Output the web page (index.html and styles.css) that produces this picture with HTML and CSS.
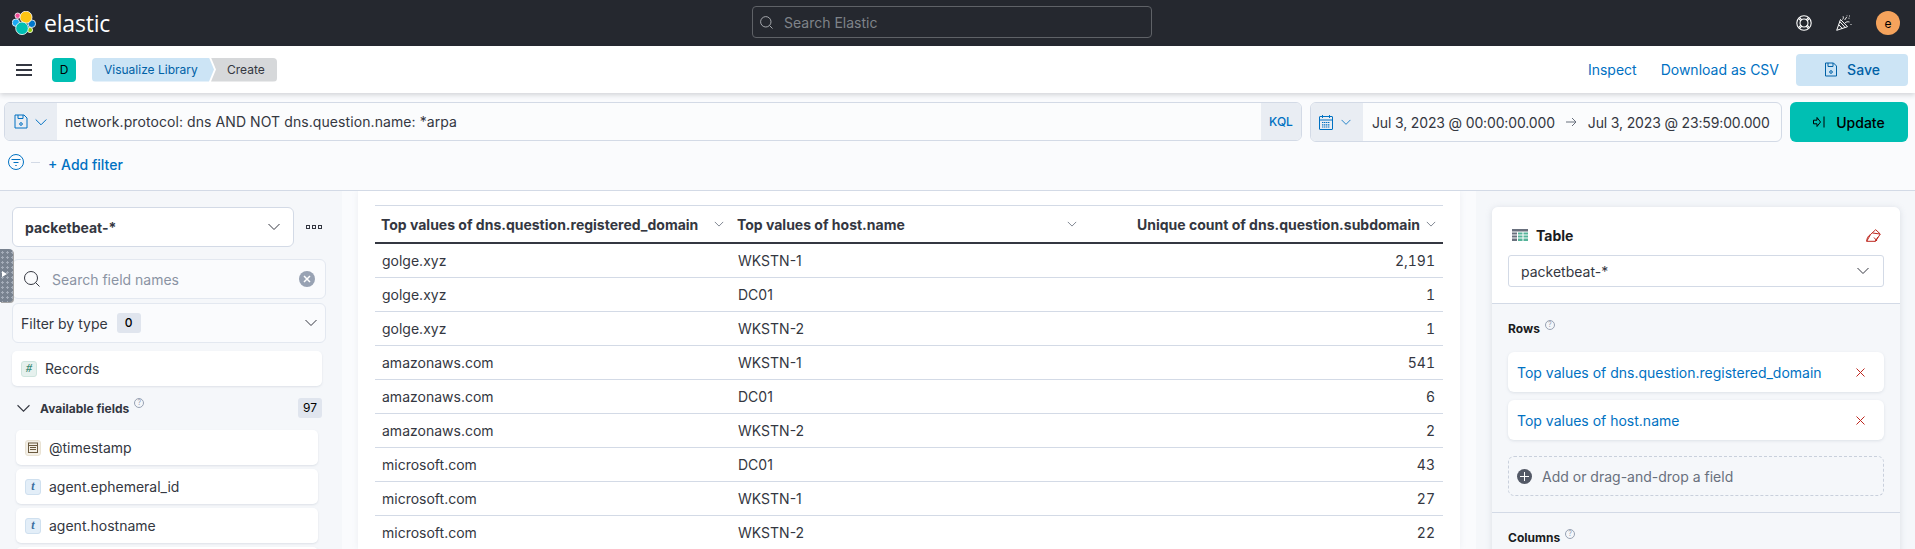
FILE: index.html
```html
<!DOCTYPE html>
<html lang="en">
<head>
  <meta charset="UTF-8" />
  <title>Create - Elastic</title>
  <link rel="stylesheet" href="styles.css">
</head>
<body>
  <header class="topbar">
    <div class="brand">
      <svg width="24" height="24" viewBox="0 0 24 24">
        <circle cx="5.700" cy="4.700" r="2.700" fill="#f04e98" stroke="#fff" stroke-width=".8"/>
        <circle cx="3.900" cy="11.700" r="3.700" fill="#1ba9f5" stroke="#fff" stroke-width=".8"/>
        <circle cx="19.800" cy="12.700" r="3.800" fill="#0077cc" stroke="#fff" stroke-width=".8"/>
        <circle cx="18" cy="19" r="2.600" fill="#93c90e" stroke="#fff" stroke-width=".8"/>
        <circle cx="14" cy="6.200" r="6" fill="#fec514" stroke="#fff" stroke-width=".8"/>
        <circle cx="10" cy="17.300" r="6.300" fill="#00bfb3" stroke="#fff" stroke-width=".8"/>
      </svg>
      <span class="brand-name">elastic</span>
    </div>
    <div class="global-search">
      <svg width="13" height="13" viewBox="0 0 13 13" fill="none" stroke="#a5a8ad"><circle cx="5.800" cy="5.800" r="5.200"/><path d="M9.500 9.500l3 3"/></svg>
      <span>Search Elastic</span>
    </div>
    <div class="top-icons">
      <svg width="16" height="16" viewBox="0 0 16 16" fill="none" stroke="#fff" stroke-width="1.100"><circle cx="8" cy="8" r="7.200"/><circle cx="8" cy="8" r="4"/><path d="M2.700 3.700l2.400 2.400M3.700 2.700l2.400 2.400M13.300 3.700l-2.400 2.400M12.300 2.700l-2.400 2.400M2.700 12.300l2.400-2.400M3.700 13.300l2.400-2.400M13.300 12.300l-2.400-2.400M12.300 13.300l-2.400-2.400"/></svg>
      <svg width="16" height="16" viewBox="0 0 16 16" fill="none" stroke="#fff"><path d="M.7 15.300l3.800-10.800 7 7.200z"/><path d="M2.800 9.800l3.800 4M3.900 6.700l5.200 5.700"/><path d="M6.500 4.500c1-1 1-2 .6-3.200M9 8c1.200-1.300 2.700-1.500 4.500-1M8.700 5l2-3M12.500 3.200h1M13.500 .5v1M14.500 9.500h1M11 .5v.8" stroke-width=".9"/></svg>
      <span class="avatar">e</span>
    </div>
  </header>

  <nav class="appbar">
    <button class="menu-btn" aria-label="Menu"><span></span><span></span><span></span></button>
    <span class="space-badge">D</span>
    <div class="crumbs">
      <span class="crumb crumb-link">Visualize Library</span>
      <span class="crumb crumb-current">Create</span>
    </div>
    <div class="app-actions">
      <a>Inspect</a>
      <a>Download as CSV</a>
      <button class="save-btn">
        <svg width="14" height="15" viewBox="0 0 14 15" fill="none" stroke="#0061a6"><path d="M1.500 1h8l3 3v10h-11z"/><path d="M4 1v3.500h5v-3.500"/><circle cx="7" cy="10" r="1.300"/></svg>
        Save
      </button>
    </div>
  </nav>

  <section class="querybar">
    <div class="query-row">
      <div class="query-input">
        <div class="addon addon-left">
          <svg width="14" height="15" viewBox="0 0 14 15" fill="none" stroke="#0071c2"><path d="M1 1h9l3 3v10h-12z"/><path d="M4 1v3.500h5v-3.500"/><circle cx="7" cy="10" r="1.300"/></svg>
          <svg width="12" height="12" viewBox="0 0 12 12" fill="none" stroke="#0071c2"><path d="M.7 3.500l5.300 5.300 5.300-5.300"/></svg>
        </div>
        <div class="query-text">network.protocol: dns AND NOT dns.question.name: *arpa</div>
        <div class="addon addon-kql">KQL</div>
      </div>
      <div class="date-picker">
        <div class="addon addon-date">
          <svg width="14" height="15" viewBox="0 0 14 15" fill="none" stroke="#0071c2"><rect x=".5" y="1.500" width="13" height="13" rx=".5"/><path d="M.5 5h13M3.500 0v3M10.500 0v3"/><path d="M3 7.500h8M3 9.800h8M3 12h8" stroke-dasharray="1.300 .6" stroke-width="1.200"/></svg>
          <svg width="10" height="10" viewBox="0 0 12 12" fill="none" stroke="#0071c2"><path d="M.7 3.500l5.300 5.300 5.300-5.300"/></svg>
        </div>
        <div class="date-range">
          <span>Jul 3, 2023 @ 00:00:00.000</span>
          <svg width="11" height="10" viewBox="0 0 11 10" fill="none" stroke="#69707d"><path d="M0 5h10M6 1l4 4-4 4"/></svg>
          <span>Jul 3, 2023 @ 23:59:00.000</span>
        </div>
      </div>
      <button class="update-btn">
        <svg width="12" height="12" viewBox="0 0 12 12" fill="none" stroke="#000"><path d="M.5 4.200h3.500v-2.700l3.500 4.500-3.500 4.500v-2.700h-3.500z"/><path d="M11 .5v11"/></svg>
        Update
      </button>
    </div>
    <div class="filter-row">
      <svg class="filter-icon" width="16" height="16" viewBox="0 0 16 16" fill="none" stroke="#0071c2"><circle cx="8" cy="8" r="7.500"/><path d="M3.500 5.500h9M5.500 8.500h5M7.300 11.500h1.400"/></svg>
      <span class="filter-dash"></span>
      <a class="add-filter">+ Add filter</a>
    </div>
  </section>

  <main class="workspace">
    <aside class="fields">
      <span class="drag-handle"></span>
      <div class="pattern-row">
        <div class="pattern-select">
          <b>packetbeat-*</b>
          <svg width="12" height="12" viewBox="0 0 12 12" fill="none" stroke="#343741"><path d="M.5 3l5.500 5.500 5.500-5.500"/></svg>
        </div>
        <svg class="pattern-more" width="16" height="16" viewBox="0 0 16 16" fill="none" stroke="#343741"><rect x=".5" y="6.500" width="3" height="3"/><rect x="6.500" y="6.500" width="3" height="3"/><rect x="12.500" y="6.500" width="3" height="3"/></svg>
      </div>
      <div class="field-search">
        <svg width="16" height="16" viewBox="0 0 16 16" fill="none" stroke="#343741"><circle cx="7" cy="7" r="6.500"/><path d="M11.500 11.500l4 4"/></svg>
        <span>Search field names</span>
        <i class="clear-btn">
          <svg width="8" height="8" viewBox="0 0 8 8" stroke="#fff" stroke-width="1.500" fill="none"><path d="M1 1l6 6M7 1l-6 6"/></svg>
        </i>
      </div>
      <div class="type-filter">
        <span>Filter by type</span>
        <em>0</em>
        <svg width="12" height="12" viewBox="0 0 12 12" fill="none" stroke="#343741"><path d="M.5 3l5.500 5.500 5.500-5.500"/></svg>
      </div>
      <div class="field-item field-records"><i class="token token-num">#</i>Records</div>
      <div class="avail-head">
        <svg width="13" height="13" viewBox="0 0 12 12" fill="none" stroke="#343741"><path d="M.5 3l5.500 5.500 5.500-5.500"/></svg>
        <b>Available fields</b>
        <i class="help">?</i>
        <em>97</em>
      </div>
      <div class="field-list">
        <div class="field-item"><i class="token token-date">
          <svg width="10" height="11" viewBox="0 0 10 11" fill="none" stroke="#6b5a3f"><rect x=".5" y="1" width="9" height="9.500"/><path d="M.5 3.500h9M2 5.500h6M2 7.500h6"/></svg>
        </i>@timestamp</div>
        <div class="field-item"><i class="token token-text">t</i>agent.ephemeral_id</div>
        <div class="field-item"><i class="token token-text">t</i>agent.hostname</div>
        <div class="field-item"></div>
      </div>
    </aside>

    <div class="chart-wrap">
      <section class="chart-panel">
        <table class="data-table">
          <colgroup><col class="col-a"><col class="col-b"><col class="col-c"></colgroup>
          <thead>
            <tr>
              <th><div class="th-in"><span>Top values of dns.question.registered_domain</span><svg width="10" height="10" viewBox="0 0 12 12" fill="none" stroke="#69707d"><path d="M1 3.500l5 5 5-5"/></svg></div></th>
              <th><div class="th-in"><span>Top values of host.name</span><svg width="10" height="10" viewBox="0 0 12 12" fill="none" stroke="#69707d"><path d="M1 3.500l5 5 5-5"/></svg></div></th>
              <th><div class="th-in th-end"><span>Unique count of dns.question.subdomain</span><svg width="10" height="10" viewBox="0 0 12 12" fill="none" stroke="#69707d"><path d="M1 3.500l5 5 5-5"/></svg></div></th>
            </tr>
          </thead>
          <tbody>
            <tr><td>golge.xyz</td><td>WKSTN-1</td><td class="num">2,191</td></tr>
            <tr><td>golge.xyz</td><td>DC01</td><td class="num">1</td></tr>
            <tr><td>golge.xyz</td><td>WKSTN-2</td><td class="num">1</td></tr>
            <tr><td>amazonaws.com</td><td>WKSTN-1</td><td class="num">541</td></tr>
            <tr><td>amazonaws.com</td><td>DC01</td><td class="num">6</td></tr>
            <tr><td>amazonaws.com</td><td>WKSTN-2</td><td class="num">2</td></tr>
            <tr><td>microsoft.com</td><td>DC01</td><td class="num">43</td></tr>
            <tr><td>microsoft.com</td><td>WKSTN-1</td><td class="num">27</td></tr>
            <tr><td>microsoft.com</td><td>WKSTN-2</td><td class="num">22</td></tr>
          </tbody>
        </table>
      </section>
    </div>

    <aside class="config">
      <div class="config-card">
        <div class="config-top">
          <div class="config-title">
            <svg width="16" height="13" viewBox="0 0 16 13"><path d="M0 0h16v2.500H0zM0 3.500h5v2H0zM0 6.500h5v2H0zM0 9.500h5v2.500H0z" fill="#69707d"/><path d="M6 3.500h4.500v2H6zM11.500 3.500H16v2h-4.500zM6 6.500h4.500v2H6zM11.500 6.500H16v2h-4.500zM6 9.500h4.500V12H6zM11.500 9.500H16V12h-4.500z" fill="#54b399"/></svg>
            <b>Table</b>
            <svg class="eraser" width="15" height="13" viewBox="0 0 15 13" fill="none" stroke="#bd271e"><path d="M.7 12.300h8.800L14.300 5 9.700.7 4.500 5.500z"/><path d="M.7 12.300c0-3 1.500-5.500 3.800-6.800M6.500 4l7.500 1M8 8.500l3 3.500M12 8l-3 4.500"/></svg>
          </div>
          <div class="config-select">
            <span>packetbeat-*</span>
            <svg width="12" height="12" viewBox="0 0 12 12" fill="none" stroke="#343741"><path d="M.5 3l5.500 5.500 5.500-5.500"/></svg>
          </div>
        </div>
        <div class="config-group">
          <div class="group-label"><b>Rows</b><i class="help">?</i></div>
          <div class="dim-item"><span>Top values of dns.question.registered_domain</span><svg width="9" height="9" viewBox="0 0 9 9" stroke="#bd271e" fill="none"><path d="M.5.500l8 8M8.500.500l-8 8"/></svg></div>
          <div class="dim-item"><span>Top values of host.name</span><svg width="9" height="9" viewBox="0 0 9 9" stroke="#bd271e" fill="none"><path d="M.5.500l8 8M8.500.500l-8 8"/></svg></div>
          <div class="dim-add">
            <svg width="15" height="15" viewBox="0 0 15 15"><circle cx="7.500" cy="7.500" r="7.500" fill="#535966"/><path d="M7.500 3v9M3 7.500h9" stroke="#fff" fill="none"/></svg>
            <span>Add or drag-and-drop a field</span>
          </div>
        </div>
        <div class="config-group">
          <div class="group-label"><b>Columns</b><i class="help">?</i></div>
        </div>
      </div>
    </aside>
  </main>
</body>
</html>
```

FILE: styles.css
```css
* {
  box-sizing: border-box;
}

html, body {
  margin: 0;
  height: 549px;
  overflow: hidden;
}

body {
  font-family: 'Inter', sans-serif;
  font-size: 14px;
  color: #343741;
  background: #f5f7fa;
}

i, em {
  font-style: normal;
}

svg {
  flex: none;
  display: block;
}

/* top dark bar */
.topbar {
  height: 46px;
  background: #25282f;
  display: flex;
  align-items: center;
  justify-content: space-between;
  padding: 0 15px 0 12px;
  position: relative;
}

.brand {
  display: flex;
  align-items: center;
  gap: 8px;
}

.brand-name {
  font-family: 'Open Sans', sans-serif;
  font-size: 23px;
  font-weight: 400;
  letter-spacing: -0.2px;
  color: #fff;
  line-height: 1;
}

.global-search {
  position: absolute;
  left: 752px;
  top: 6px;
  width: 400px;
  height: 32px;
  border: 1px solid #5f6267;
  border-radius: 4px;
  display: flex;
  align-items: center;
  gap: 11px;
  padding-left: 7px;
  color: #7f8389;
}

.top-icons {
  display: flex;
  align-items: center;
  gap: 24px;
}

.avatar {
  width: 24px;
  height: 24px;
  border-radius: 50%;
  background: #f5a35c;
  color: #000;
  font-size: 12px;
  display: flex;
  align-items: center;
  justify-content: center;
}

/* app bar with breadcrumbs */
.appbar {
  height: 47px;
  background: #fff;
  display: flex;
  align-items: center;
  padding: 0 7px 0 16px;
  box-shadow: 0 2px 5px rgba(52, 55, 65, 0.2);
  position: relative;
}

.menu-btn {
  border: none;
  background: none;
  padding: 0;
  width: 16px;
  display: flex;
  flex-direction: column;
  gap: 3px;
  margin-right: 20px;
}

.menu-btn span {
  display: block;
  height: 2px;
  background: #343741;
}

.space-badge {
  width: 24px;
  height: 24px;
  background: #00bfb3;
  border-radius: 4px;
  color: #000;
  font-size: 12px;
  display: flex;
  align-items: center;
  justify-content: center;
  margin-right: 16px;
}

.crumbs {
  display: flex;
  font-size: 12px;
  height: 24px;
  line-height: 24px;
}

.crumb {
  display: block;
  white-space: nowrap;
}

.crumb-link {
  width: 122px;
  background: #cce4f5;
  color: #0061a6;
  padding-left: 12px;
  border-radius: 4px 0 0 4px;
  clip-path: polygon(0 0, calc(100% - 5px) 0, 100% 50%, calc(100% - 5px) 100%, 0 100%);
  margin-right: -3px;
}

.crumb-current {
  width: 66px;
  background: #d6d8da;
  color: #343741;
  padding-left: 16px;
  border-radius: 0 4px 4px 0;
  clip-path: polygon(0 0, 100% 0, 100% 100%, 0 100%, 5px 50%);
}

.app-actions {
  margin-left: auto;
  display: flex;
  align-items: center;
  color: #0071c2;
}

.app-actions a {
  margin-right: 24px;
}

.app-actions a + a {
  margin-right: 17px;
}

.save-btn {
  width: 112px;
  height: 32px;
  border: none;
  border-radius: 4px;
  background: #cce4f5;
  color: #0061a6;
  font: 500 14px 'Inter', sans-serif;
  display: flex;
  align-items: center;
  justify-content: center;
  gap: 9px;
}

/* query bar */
.querybar {
  height: 98px;
  background: #fafbfd;
  border-bottom: 1px solid #d3dae6;
  padding: 9px 7px 0 4px;
}

.query-row {
  display: flex;
  height: 40px;
}

.query-input {
  width: 1298px;
  height: 39px;
  border: 1px solid #d3dae6;
  border-radius: 6px;
  display: flex;
  overflow: hidden;
  background: #fbfcfd;
}

.addon {
  background: #e9edf3;
  display: flex;
  align-items: center;
  flex: none;
}

.addon-left {
  width: 52px;
  gap: 7px;
  padding-left: 9px;
}

.query-text {
  flex: 1;
  padding-left: 8px;
  line-height: 37px;
  letter-spacing: 0.08px;
  white-space: nowrap;
}

.addon-kql {
  width: 40px;
  justify-content: center;
  color: #0071c2;
  font-size: 12px;
  font-weight: 500;
}

.date-picker {
  width: 472px;
  height: 40px;
  margin-left: 8px;
  border: 1px solid #d3dae6;
  border-radius: 6px;
  display: flex;
  overflow: hidden;
  background: #fbfcfd;
}

.addon-date {
  width: 52px;
  gap: 8px;
  padding-left: 8px;
}

.date-range {
  flex: 1;
  display: flex;
  align-items: center;
  gap: 11px;
  padding-left: 9px;
  letter-spacing: -0.15px;
  white-space: nowrap;
}

.update-btn {
  width: 118px;
  height: 40px;
  margin-left: 8px;
  border: none;
  border-radius: 6px;
  background: #00bfb3;
  color: #000;
  font: 500 14px 'Inter', sans-serif;
  display: flex;
  align-items: center;
  justify-content: center;
  gap: 11px;
}

.filter-row {
  display: flex;
  align-items: center;
  margin-top: 8px;
  padding-left: 4px;
  height: 29px;
}

.filter-icon {
  margin-bottom: 5px;
}

.filter-dash {
  width: 9px;
  height: 1px;
  background: #d3dae6;
  margin: 0 8px 5px 7px;
}

.add-filter {
  color: #0071c2;
  font-weight: 500;
}

/* main area */
.workspace {
  display: flex;
  height: 358px;
  overflow: hidden;
}

.fields {
  width: 342px;
  padding: 16px 0 0 12px;
  position: relative;
  flex: none;
}

.drag-handle {
  position: absolute;
  left: 0;
  top: 58px;
  width: 13px;
  height: 53px;
  border-radius: 0 4px 4px 0;
  background: radial-gradient(circle, #a5adb9 1px, transparent 1.3px) 0 1px / 5px 5px #78828f;
  box-shadow: 1px 1px 0 #a3a3a3;
}

.drag-handle::before {
  content: "";
  position: absolute;
  left: 2px;
  top: 22px;
  border-left: 5px solid #fff;
  border-top: 3px solid transparent;
  border-bottom: 3px solid transparent;
}

.pattern-row {
  display: flex;
  align-items: center;
  gap: 12px;
  margin-bottom: 12px;
}

.pattern-select {
  width: 282px;
  height: 40px;
  border: 1px solid #d3dae6;
  border-radius: 6px;
  background: #fff;
  display: flex;
  align-items: center;
  justify-content: space-between;
  padding: 0 13px 0 12px;
}

.field-search, .type-filter {
  width: 314px;
  height: 40px;
  border: 1px solid #e3e8f0;
  border-radius: 6px;
  background: #fafbfd;
  display: flex;
  align-items: center;
}

.field-search {
  padding: 0 10px 0 11px;
  gap: 12px;
  margin-bottom: 4px;
  color: #8a93a3;
}

.clear-btn {
  width: 16px;
  height: 16px;
  margin-left: auto;
  border-radius: 50%;
  background: #98a2b3;
  display: flex;
  align-items: center;
  justify-content: center;
}

.type-filter {
  padding: 0 8px;
  margin-bottom: 8px;
}

.type-filter em {
  width: 24px;
  height: 20px;
  margin-left: 9px;
  border-radius: 3px;
  background: #e0e5ee;
  font-size: 12px;
  font-weight: 500;
  color: #000;
  text-align: center;
  line-height: 20px;
}

.type-filter svg {
  margin-left: auto;
}

.field-item {
  background: #fff;
  border-radius: 5px;
  height: 35px;
  display: flex;
  align-items: center;
  box-shadow: 0 1px 2px rgba(152, 162, 179, 0.25);
  padding-left: 9px;
  gap: 8px;
  flex: none;
}

.field-records {
  width: 310px;
}

.token {
  width: 16px;
  height: 16px;
  border-radius: 3px;
  display: flex;
  align-items: center;
  justify-content: center;
  font-family: 'Liberation Serif', serif;
  font-style: italic;
  font-weight: 700;
  font-size: 12px;
}

.token-num {
  background: #e6f1ee;
  color: #3d8b76;
  border: 1px solid #cfe5de;
}

.token-date {
  background: #f3efe6;
  border: 1px solid #e9e2d3;
}

.token-text {
  background: #e3eef8;
  color: #3a6f9f;
  border: 1px solid #cfe0ef;
}

.avail-head {
  width: 310px;
  height: 20px;
  margin: 12px 0;
  padding-left: 5px;
  display: flex;
  align-items: center;
  font-size: 12px;
}

.avail-head b {
  margin-left: 10px;
}

.avail-head em {
  margin-left: auto;
  width: 24px;
  height: 20px;
  background: #e0e5ee;
  border-radius: 3px;
  text-align: center;
  line-height: 20px;
  color: #000;
}

.help {
  width: 10px;
  height: 10px;
  margin-left: 5px;
  border: 1px solid #98a2b3;
  border-radius: 50%;
  color: #98a2b3;
  font-size: 7px;
  font-weight: 400;
  line-height: 8px;
  text-align: center;
  align-self: flex-start;
}

.field-list {
  width: 302px;
  margin-left: 4px;
  display: flex;
  flex-direction: column;
  gap: 4px;
}

/* table panel */
.chart-wrap {
  width: 1134px;
  flex: none;
  padding: 0 16px;
  background: #fafbfd;
}

.chart-panel {
  height: 100%;
  background: #fff;
  box-shadow: 0 0 6px rgba(152, 162, 179, 0.15);
  padding: 14px 17px 0 17px;
}

.data-table {
  width: 1068px;
  table-layout: fixed;
  border-collapse: separate;
  border-spacing: 0;
}

.col-a {
  width: 356px;
}

.col-b {
  width: 353px;
}

.data-table th {
  height: 39px;
  padding: 0 7px 0 6px;
  border-top: 1px solid #d3dae6;
  border-bottom: 2px solid #343741;
  text-align: left;
  font-weight: 700;
}

.th-in {
  display: flex;
  align-items: center;
  justify-content: space-between;
}

.th-end {
  justify-content: flex-end;
  gap: 6px;
}

.data-table td {
  height: 34px;
  padding: 0 8px 0 7px;
  border-bottom: 1px solid #d3dae6;
}

.data-table td.num {
  text-align: right;
  font-feature-settings: "tnum";
}

/* config panel */
.config {
  width: 424px;
  padding: 16px 0 0 16px;
  flex: none;
}

.config-card {
  width: 408px;
  background: #f5f7fa;
  border-radius: 6px 6px 0 0;
  box-shadow: 0 1px 6px rgba(152, 162, 179, 0.3);
  height: 400px;
}

.config-top {
  background: #fff;
  padding: 16px;
  border-radius: 6px 6px 0 0;
  border-bottom: 1px solid #d3dae6;
}

.config-title {
  display: flex;
  align-items: center;
  gap: 8px;
  height: 24px;
  margin-bottom: 8px;
  padding: 0 3px 0 4px;
  color: #1a1c21;
}

.eraser {
  margin-left: auto;
}

.config-select {
  height: 32px;
  border: 1px solid #d3dae6;
  border-radius: 3px;
  display: flex;
  align-items: center;
  justify-content: space-between;
  padding: 0 14px 0 12px;
}

.config-group {
  padding: 16px;
  border-bottom: 1px solid #d3dae6;
}

.group-label {
  display: flex;
  font-size: 12px;
  color: #1a1c21;
  height: 16px;
  align-items: center;
  margin-bottom: 16px;
}

.dim-item {
  height: 40px;
  background: #fff;
  border-radius: 6px;
  box-shadow: 0 1px 3px rgba(152, 162, 179, 0.25);
  display: flex;
  align-items: center;
  justify-content: space-between;
  padding: 0 19px 0 9px;
  color: #0071c2;
  margin-bottom: 8px;
}

.dim-add {
  height: 40px;
  margin-top: 16px;
  border: 1px dashed #c9d0dc;
  border-radius: 6px;
  display: flex;
  align-items: center;
  gap: 10px;
  padding-left: 8px;
  color: #69707d;
}
```
